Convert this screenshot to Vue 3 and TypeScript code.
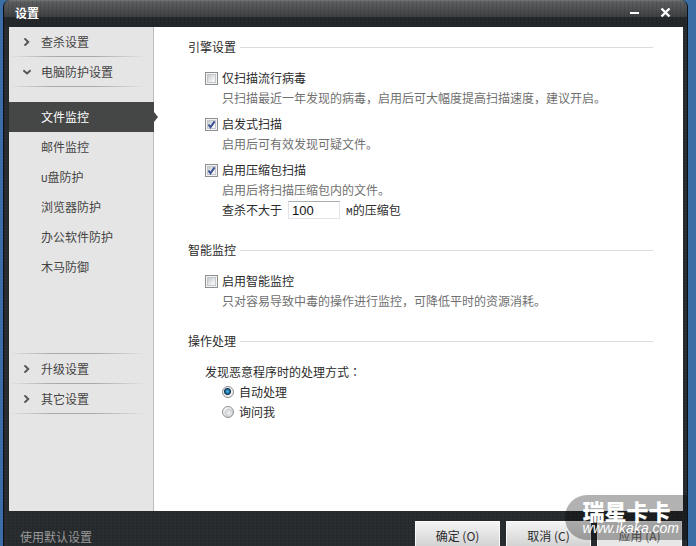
<script setup lang="ts">
import { ref } from 'vue'

interface MenuItem {
  id: string
  latin?: string
  text: string
}

const protectItems: MenuItem[] = [
  { id: 'file', text: '文件监控' },
  { id: 'mail', text: '邮件监控' },
  { id: 'usb', latin: 'U', text: '盘防护' },
  { id: 'browser', text: '浏览器防护' },
  { id: 'office', text: '办公软件防护' },
  { id: 'trojan', text: '木马防御' },
]

const bottomGroups = ['升级设置', '其它设置']

const active = ref('file')
const popularOnly = ref(false)
const heuristic = ref(true)
const archives = ref(true)
const archiveLimit = ref('100')
const smartMonitor = ref(false)
const action = ref<'auto' | 'ask'>('auto')
</script>

<template>
  <div class="desktop">
    <div class="window">
      <header class="titlebar">
        <h1>设置</h1>
        <button type="button" class="caption" aria-label="最小化">
          <svg width="11" height="11" viewBox="0 0 11 11"><path d="M1 6H10" stroke="#fff" stroke-width="2" /></svg>
        </button>
        <button type="button" class="caption" aria-label="关闭">
          <svg width="11" height="11" viewBox="0 0 11 11"><path d="M1.5 1.5L9.5 9.5M9.5 1.5L1.5 9.5" stroke="#fff" stroke-width="2.4" /></svg>
        </button>
      </header>

      <div class="body">
        <nav class="sidebar">
          <button type="button" class="group">
            <svg width="8" height="8" viewBox="0 0 8 8"><path d="M1.5 0.4L5.2 4L1.5 7.6" /></svg>
            查杀设置
          </button>
          <button type="button" class="group">
            <svg width="8" height="8" viewBox="0 0 8 8"><path d="M0.3 2.3L4 5.5L7.7 2.3" /></svg>
            电脑防护设置
          </button>
          <ul class="submenu">
            <li v-for="item in protectItems" :key="item.id">
              <a href="#" :class="{ active: active === item.id }" @click.prevent="active = item.id"><span v-if="item.latin" class="latin">{{ item.latin }}</span>{{ item.text }}</a>
            </li>
          </ul>
          <button v-for="name in bottomGroups" :key="name" type="button" class="group">
            <svg width="8" height="8" viewBox="0 0 8 8"><path d="M1.5 0.4L5.2 4L1.5 7.6" /></svg>
            {{ name }}
          </button>
        </nav>

        <main class="content">
          <section>
            <h2>引擎设置</h2>
            <div class="option">
              <label class="check">
                <span class="box">
                  <input v-model="popularOnly" type="checkbox" />
                  <svg v-if="popularOnly" viewBox="0 0 13 13"><path d="M3.5 6.5L5.5 9.3L9.6 3.4" /></svg>
                </span>
                仅扫描流行病毒
              </label>
              <p class="hint">只扫描最近一年发现的病毒，启用后可大幅度提高扫描速度，建议开启。</p>
            </div>
            <div class="option">
              <label class="check">
                <span class="box">
                  <input v-model="heuristic" type="checkbox" />
                  <svg v-if="heuristic" viewBox="0 0 13 13"><path d="M3.5 6.5L5.5 9.3L9.6 3.4" /></svg>
                </span>
                启发式扫描
              </label>
              <p class="hint">启用后可有效发现可疑文件。</p>
            </div>
            <div class="option">
              <label class="check">
                <span class="box">
                  <input v-model="archives" type="checkbox" />
                  <svg v-if="archives" viewBox="0 0 13 13"><path d="M3.5 6.5L5.5 9.3L9.6 3.4" /></svg>
                </span>
                启用压缩包扫描
              </label>
              <p class="hint">启用后将扫描压缩包内的文件。</p>
              <div class="limit">
                <label for="limit">查杀不大于</label>
                <input id="limit" v-model="archiveLimit" type="text" />
                <span><span class="latin">M</span>的压缩包</span>
              </div>
            </div>
          </section>

          <section>
            <h2>智能监控</h2>
            <div class="option">
              <label class="check">
                <span class="box">
                  <input v-model="smartMonitor" type="checkbox" />
                  <svg v-if="smartMonitor" viewBox="0 0 13 13"><path d="M3.5 6.5L5.5 9.3L9.6 3.4" /></svg>
                </span>
                启用智能监控
              </label>
              <p class="hint">只对容易导致中毒的操作进行监控，可降低平时的资源消耗。</p>
            </div>
          </section>

          <section>
            <h2>操作处理</h2>
            <fieldset>
              <legend>发现恶意程序时的处理方式<span class="colon">：</span></legend>
              <label class="choice"><input v-model="action" type="radio" name="action" value="auto" />自动处理</label>
              <label class="choice"><input v-model="action" type="radio" name="action" value="ask" />询问我</label>
            </fieldset>
          </section>
        </main>
      </div>

      <footer class="footer">
        <a href="#" class="defaults" @click.prevent>使用默认设置</a>
        <button type="button">确定 (O)</button>
        <button type="button">取消 (C)</button>
        <button type="button" class="dim">应用 (A)</button>
      </footer>

      <div class="badge">
        <strong>瑞星卡卡</strong>
        <em>www.ikaka.com</em>
      </div>
    </div>
  </div>
</template>

<style>
body {
  background: #3b6ea5;
}
</style>

<style scoped>
.desktop {
  height: 100vh;
  padding: 0 8px 0 3px;
  box-sizing: border-box;
  overflow: hidden;
  background: #3b6ea5;
  font: 12px/20px "Noto Sans CJK SC", sans-serif;
  color: #2b2b2b;
}
h1, h2, p, ul, fieldset, legend {
  margin: 0;
  padding: 0;
  border: 0;
  font-size: 12px;
  font-weight: normal;
}
ul {
  list-style: none;
}
button, input {
  font: inherit;
  color: inherit;
  margin: 0;
  padding: 0;
}
.window {
  position: relative;
  display: flex;
  flex-direction: column;
  height: 100%;
  box-sizing: border-box;
  padding: 0 4px 0 5px;
  border: solid #08111c;
  border-width: 0 1px;
  border-radius: 7px 7px 0 0;
  overflow: hidden;
  background:
    repeating-linear-gradient(0deg, rgba(255, 255, 255, 0.02) 0 1px, transparent 1px 3px),
    repeating-linear-gradient(90deg, rgba(0, 0, 0, 0.08) 0 1px, transparent 1px 4px),
    #272b2e;
}
.titlebar {
  flex: none;
  display: flex;
  align-items: center;
  gap: 10px;
  height: 27px;
  margin: 0 -4px 0 -5px;
  padding: 0 11px 2px;
  box-sizing: border-box;
  background:
    repeating-linear-gradient(90deg, rgba(0, 0, 0, 0.08) 0 1px, transparent 1px 4px),
    linear-gradient(#777a7b 0, #5a5c5e 2px, #3d4042 17px, #25282a 17px, #25282a 100%);
}
h1 {
  flex: 1;
  font-weight: bold;
  color: #fff;
}
.caption {
  display: flex;
  justify-content: center;
  width: 21px;
  border: 0;
  background: none;
}
.body {
  flex: 1;
  min-height: 0;
  display: flex;
  background: #fff;
}
.sidebar {
  flex: none;
  width: 145px;
  box-sizing: border-box;
  border-right: 1px solid #bdbdbd;
  background: #e5e5e5;
}
.group {
  display: flex;
  align-items: center;
  gap: 10px;
  width: 100%;
  height: 30px;
  padding-left: 14px;
  border: 0;
  color: #444;
  background: linear-gradient(90deg, transparent, #aaa 30%, #aaa 60%, transparent 95%) bottom / 100% 1px no-repeat;
}
.group svg {
  fill: none;
  stroke: #555;
  stroke-width: 2;
}
.submenu {
  min-height: 267px;
  box-sizing: border-box;
  padding-top: 15px;
  background: linear-gradient(90deg, transparent, #aaa 30%, #aaa 60%, transparent 95%) bottom / 100% 1px no-repeat;
}
.submenu a {
  position: relative;
  display: block;
  padding-left: 32px;
  line-height: 30px;
  color: #444;
  text-decoration: none;
}
.submenu .active {
  margin-right: -1px;
  color: #fff;
  background: #454746;
}
.submenu .active::after {
  content: "";
  position: absolute;
  left: 100%;
  top: 10px;
  border: solid transparent;
  border-width: 5px 0 5px 4px;
  border-left-color: #454746;
}
.latin {
  font-family: "Liberation Mono", monospace;
  font-size: 11px;
  line-height: 1;
}
.content {
  flex: 1;
  min-width: 0;
  padding: 10px 30px 0 34px;
}
section {
  margin-bottom: 20px;
}
h2 {
  display: flex;
  align-items: center;
  gap: 4px;
  margin-bottom: 11px;
}
h2::after {
  content: "";
  flex: 1;
  height: 1px;
  background: #dcdcdc;
}
.option {
  padding-left: 17px;
}
.option + .option {
  margin-top: 6px;
}
.check {
  display: flex;
  align-items: center;
  gap: 4px;
}
.box {
  position: relative;
  display: flex;
}
.box input {
  appearance: none;
  width: 13px;
  height: 13px;
  border: 1px solid #8e8f8f;
  background: linear-gradient(135deg, #c6cace, #f6f6f6 80%) content-box, #f4f4f4;
  padding: 2px;
  box-sizing: border-box;
  box-shadow: inset 0 0 0 1px #f4f4f4, inset 0 0 0 2px #c4c8cc;
}
.box svg {
  position: absolute;
  inset: 0;
  fill: none;
  stroke: #3c5395;
  stroke-width: 2;
  pointer-events: none;
}
.hint {
  padding-left: 17px;
  color: #707070;
}
.limit {
  display: flex;
  align-items: center;
  gap: 6px;
  padding-left: 17px;
}
.limit input {
  width: 52px;
  height: 18px;
  box-sizing: border-box;
  padding-left: 3px;
  border: 1px solid #e2e3ea;
  border-top-color: #abadb3;
  font: 13px "Liberation Sans", sans-serif;
  color: #111;
}
fieldset {
  min-width: 0;
  padding-left: 17px;
}
.colon {
  font-family: "Noto Sans CJK TC", sans-serif;
}
.choice {
  display: flex;
  align-items: center;
  gap: 5px;
  padding-left: 17px;
}
.choice input {
  appearance: none;
  width: 12px;
  height: 12px;
  border: 1px solid #8e8f8f;
  border-radius: 50%;
  box-sizing: border-box;
  background: radial-gradient(circle at 60% 60%, #f4f4f4, #ccd0d3 4px, #f4f4f4 5px);
}
.choice input:checked {
  background: radial-gradient(circle at 45% 45%, #5fc3ea 0, #1b6b9c 2px, #0c3152 3px, #f0f0f0 4px);
}
.footer {
  flex: none;
  display: flex;
  align-items: flex-start;
  gap: 6px;
  height: 35px;
  box-sizing: border-box;
  padding: 10px 1px 0 11px;
}
.footer button {
  flex: none;
  width: 85px;
  height: 29px;
  border: 1px solid #fafafa;
  background: linear-gradient(#f4f4f4, #cfcfcf);
}
.footer .dim {
  color: #666;
  background: #e8e8e8;
}
.defaults {
  flex: 1;
  line-height: 32px;
  color: #999;
  text-decoration: none;
}
.badge {
  position: absolute;
  right: 0;
  bottom: 6px;
  display: flex;
  flex-direction: column;
  height: 45px;
  box-sizing: border-box;
  padding: 6px 8px 0 18px;
  border-radius: 22px 0 0 22px;
  background: rgba(0, 0, 0, 0.3);
  color: #fff;
  pointer-events: none;
}
.badge strong {
  font-size: 22px;
  font-weight: 900;
  line-height: 18px;
}
.badge em {
  font: italic 14px/18px "Liberation Sans", sans-serif;
}
</style>
